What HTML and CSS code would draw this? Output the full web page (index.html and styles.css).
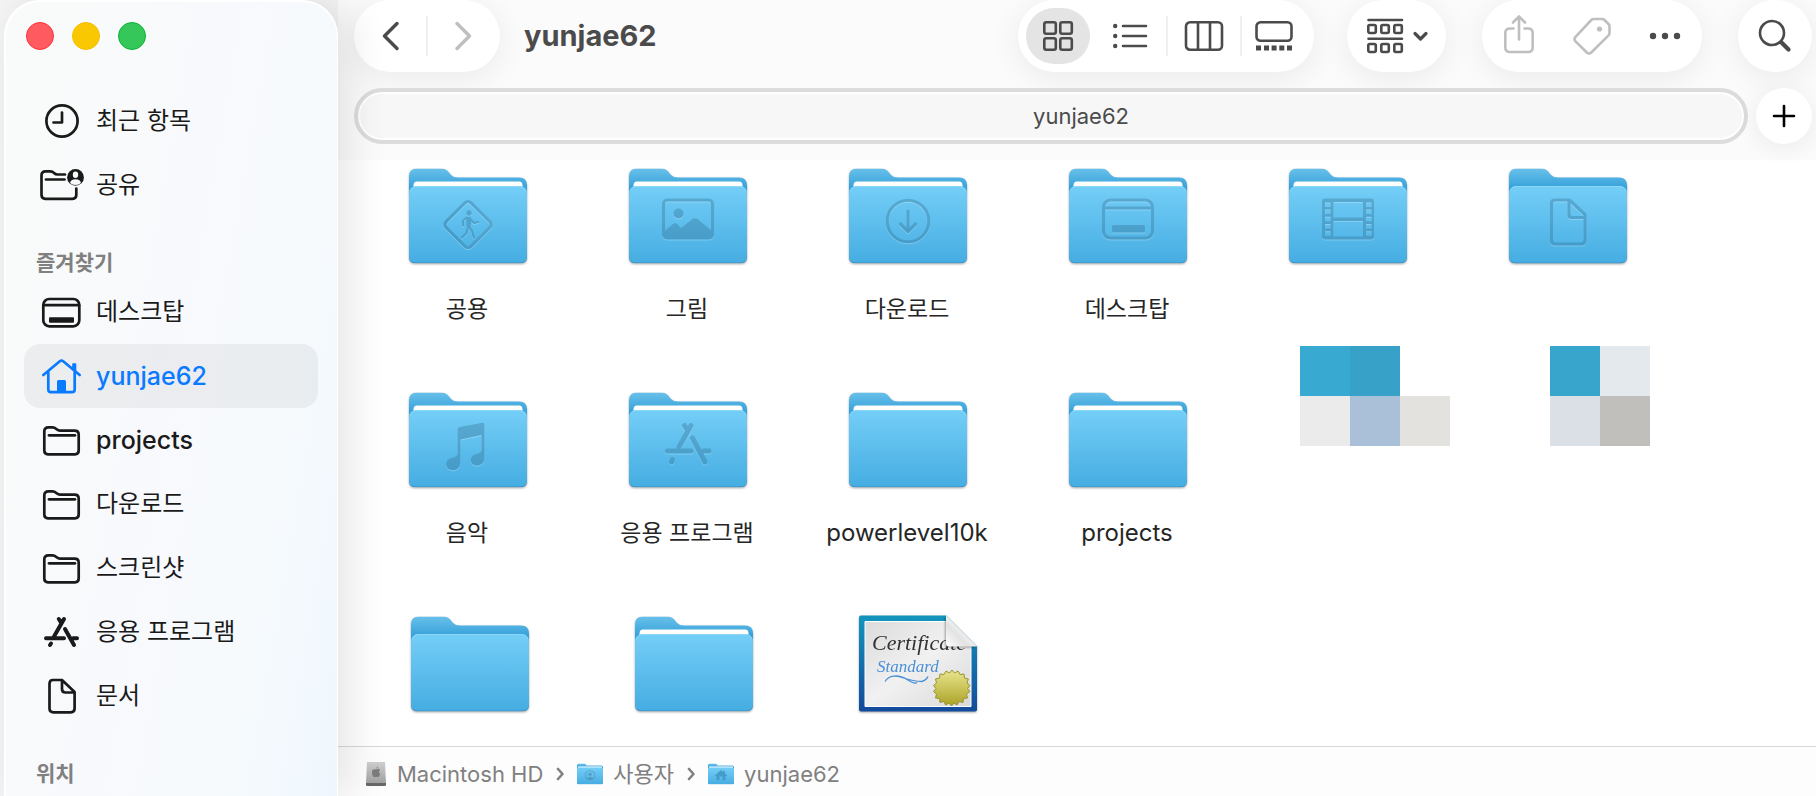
FILE: index.html
```html
<!DOCTYPE html>
<html lang="ko">
<head>
    <meta charset="UTF-8">
    <meta name="viewport" content="width=device-width, initial-scale=1.0">
    <title>yunjae62</title>
    <link rel="stylesheet" href="styles.css">
</head>
<body>
    <!-- Shared shapes -->
    <svg class="shapes" width="0" height="0" aria-hidden="true">
        <defs>
            <linearGradient id="backFill" x1="0" y1="0" x2="0" y2="1">
                <stop offset="0" stop-color="#68c0ea"/>
                <stop offset="0.5" stop-color="#36a1da"/>
                <stop offset="1" stop-color="#2f9bd5"/>
            </linearGradient>
            <linearGradient id="frontFill" x1="0" y1="0" x2="0" y2="1">
                <stop offset="0" stop-color="#74cef7"/>
                <stop offset="1" stop-color="#46ade2"/>
            </linearGradient>
            <linearGradient id="glyphFill" gradientUnits="userSpaceOnUse" x1="0" y1="30" x2="0" y2="76">
                <stop offset="0" stop-color="#58a9d1"/>
                <stop offset="1" stop-color="#459cc8"/>
            </linearGradient>
            <linearGradient id="certFrame" x1="0" y1="0" x2="0" y2="1">
                <stop offset="0" stop-color="#1395bd"/>
                <stop offset="1" stop-color="#134a9c"/>
            </linearGradient>
            <linearGradient id="certPaper" x1="0" y1="0" x2="1" y2="1">
                <stop offset="0" stop-color="#dcdcdc"/>
                <stop offset="0.5" stop-color="#f1f1f1"/>
                <stop offset="1" stop-color="#d9d9d9"/>
            </linearGradient>
            <linearGradient id="certFold" x1="0" y1="1" x2="0.6" y2="0.4">
                <stop offset="0" stop-color="#ffffff"/>
                <stop offset="0.6" stop-color="#e2e2e2"/>
                <stop offset="1" stop-color="#fafafa"/>
            </linearGradient>
            <linearGradient id="sealFill" x1="0" y1="0" x2="0" y2="1">
                <stop offset="0" stop-color="#e9e68f"/>
                <stop offset="1" stop-color="#aba226"/>
            </linearGradient>
            <linearGradient id="diskFill" x1="0" y1="0" x2="0" y2="1">
                <stop offset="0" stop-color="#cfcfcf"/>
                <stop offset="1" stop-color="#a2a2a2"/>
            </linearGradient>
        </defs>
        <symbol id="folder-back" viewBox="0 0 118 95">
            <path fill="url(#backFill)" d="M0 8Q0 0 8 0H32Q37 0 40 4L42 6.500Q44.500 9 49 9H110Q118 9 118 17V40H0Z"/>
        </symbol>
        <symbol id="folder-front" viewBox="0 0 118 95">
            <path fill="#3b94c9" d="M0 40H118V88Q118 95 111 95H7Q0 95 0 88Z"/>
            <path fill="url(#frontFill)" d="M0 26Q0 17.500 8 17.500H110Q118 17.500 118 26V87Q118 94 111 94H7Q0 94 0 87Z"/>
            <path fill="none" stroke="#8cd8fa" d="M1 23Q2 18 8 18H110Q116 18 117 23"/>
        </symbol>
        <symbol id="folder-full" viewBox="0 0 118 95">
            <use href="#folder-back"/>
            <path fill="#fff" d="M4.500 20V17Q4.500 13 8 13H110Q113.500 13 113.500 17V20Z"/>
            <use href="#folder-front"/>
        </symbol>
        <symbol id="folder-empty" viewBox="0 0 118 95">
            <use href="#folder-back"/>
            <use href="#folder-front"/>
        </symbol>
        <symbol id="nav-folder" viewBox="0 0 44 40">
            <path d="M8 34.300Q4.300 34.300 4.300 30.600V11.500Q4.300 7.300 8.500 7.300H12.500Q14.500 7.300 16 8.700L17 9.500Q18.200 10.600 20 10.600H34.500Q38.700 10.600 38.700 14.500V30.600Q38.700 34.300 35 34.300Z"/>
            <path d="M9 15.300H35"/>
        </symbol>
        <symbol id="nav-apps" viewBox="0 0 44 40">
            <path d="M24 7L14 24.500M18.800 7L21 10.500M25 17L34 33M6 26.300H24M33 26.300H37M11 31.500L10 33" stroke-width="4"/>
        </symbol>
    </svg>

    <div class="window">
        <aside class="sidebar">
            <div class="lights">
                <button class="light light-close" aria-label="닫기"></button>
                <button class="light light-minimize" aria-label="최소화"></button>
                <button class="light light-zoom" aria-label="확대"></button>
            </div>
            <nav>
                <ul class="nav-list">
                    <li><a class="nav-item" href="#">
                        <svg class="nav-icon" viewBox="0 0 44 40"><circle cx="22" cy="20" r="15.600"/><path d="M22 11.500V21.500H13.500"/></svg>
                        최근 항목</a></li>
                    <li><a class="nav-item" href="#">
                        <svg class="nav-icon" viewBox="0 0 44 40">
                            <path d="M25 9.500H17.500Q15.500 9.500 14 8L13 7.200Q11.800 6.300 10 6.300H5.500Q1.500 6.300 1.500 10.500V30Q1.500 33.800 5.300 33.800H32.500Q36.300 33.800 36.300 30V23.500"/>
                            <path d="M6 14.500H24.500"/>
                            <circle class="solid" cx="35.500" cy="12.400" r="8.400"/>
                            <ellipse class="hole" cx="35.500" cy="9.800" rx="2.700" ry="3.200"/>
                            <path class="hole" d="M30 18Q30.500 14.200 35.500 14.200T41 18Q39 20 35.500 20T30 18Z"/>
                        </svg>
                        공유</a></li>
                </ul>
                <h2 class="nav-title">즐겨찾기</h2>
                <ul class="nav-list">
                    <li><a class="nav-item" href="#">
                        <svg class="nav-icon" viewBox="0 0 44 40"><rect x="3.300" y="7" width="36" height="27.300" rx="6"/><path d="M4 13.200H39"/><rect class="solid" x="9" y="25.300" width="25" height="5.400" rx="1"/></svg>
                        데스크탑</a></li>
                    <li><a class="nav-item latin active" href="#" aria-current="page">
                        <svg class="nav-icon" viewBox="0 0 44 40">
                            <path d="M3.300 19L19.800 5.300Q21.500 4 23.200 5.300L39.700 19M8.300 16V33.500Q8.300 36.200 11 36.200H32Q34.700 36.200 34.700 33.500V16"/>
                            <path class="solid" d="M17 36V25.500Q17 24 18.500 24H24.500Q26 24 26 25.500V36ZM32.200 12V8Q32.200 7.300 33 7.300H35.500Q36.300 7.300 36.300 8V15.500Z"/>
                        </svg>
                        yunjae62</a></li>
                    <li><a class="nav-item latin" href="#"><svg class="nav-icon"><use href="#nav-folder"/></svg>projects</a></li>
                    <li><a class="nav-item" href="#"><svg class="nav-icon"><use href="#nav-folder"/></svg>다운로드</a></li>
                    <li><a class="nav-item" href="#"><svg class="nav-icon"><use href="#nav-folder"/></svg>스크린샷</a></li>
                    <li><a class="nav-item" href="#"><svg class="nav-icon"><use href="#nav-apps"/></svg>응용 프로그램</a></li>
                    <li><a class="nav-item" href="#">
                        <svg class="nav-icon" viewBox="0 0 44 40"><path d="M13 4H22L34.600 16V32.500Q34.600 36.300 30.800 36.300H13.500Q9.500 36.300 9.500 32.500V7.800Q9.500 4 13 4ZM22 4V13Q22 16.500 25.500 16.500H34.500"/></svg>
                        문서</a></li>
                </ul>
                <h2 class="nav-title">위치</h2>
            </nav>
        </aside>

        <main class="main">
            <header class="header">
                <div class="toolbar">
                    <div class="pill nav-pill">
                        <button class="tool" aria-label="뒤로"><svg width="20" height="32" viewBox="0 0 20 32" stroke-width="3.500"><path d="M17 3.500L4.500 16L17 28.500"/></svg></button>
                        <span class="divider"></span>
                        <button class="tool" aria-label="앞으로" disabled><svg width="20" height="32" viewBox="0 0 20 32" stroke-width="3.500"><path d="M3 3.500L15.500 16L3 28.500"/></svg></button>
                    </div>
                    <h1 class="title">yunjae62</h1>

                    <div class="pill view-pill">
                        <button class="tool selected" aria-label="아이콘 보기"><svg width="32" height="32" viewBox="0 0 32 32"><rect x="2.300" y="2.300" width="11.500" height="11.500" rx="2"/><rect x="18.300" y="2.300" width="11.500" height="11.500" rx="2"/><rect x="2.300" y="18.300" width="11.500" height="11.500" rx="2"/><rect x="18.300" y="18.300" width="11.500" height="11.500" rx="2"/></svg></button>
                        <button class="tool tool-list" aria-label="목록 보기"><svg width="36" height="32" viewBox="0 0 36 32"><path d="M11 6H34M11 16H34M11 26H34"/><path class="solid" d="M1 6a2.200 2.200 0 1 0 4.400 0a2.200 2.200 0 1 0-4.400 0M1 16a2.200 2.200 0 1 0 4.400 0a2.200 2.200 0 1 0-4.400 0M1 26a2.200 2.200 0 1 0 4.400 0a2.200 2.200 0 1 0-4.400 0"/></svg></button>
                        <span class="divider"></span>
                        <button class="tool tool-columns" aria-label="계층 보기"><svg width="40" height="32" viewBox="0 0 40 32"><rect x="2" y="2.300" width="36" height="27.400" rx="4"/><path d="M14 3V29M26 3V29"/></svg></button>
                        <span class="divider"></span>
                        <button class="tool" aria-label="갤러리 보기"><svg width="40" height="32" viewBox="0 0 40 32"><rect x="2.500" y="2.300" width="35" height="18.500" rx="4"/><path class="solid" d="M2 25.500H7V30.500H2ZM10 25.500H15V30.500H10ZM17.600 25.500H22.600V30.500H17.600ZM25.300 25.500H30.300V30.500H25.300ZM33 25.500H38V30.500H33Z"/></svg></button>
                    </div>

                    <div class="pill group-pill">
                        <button class="tool" aria-label="그룹화"><svg width="64" height="38" viewBox="0 0 64 38"><path d="M3.500 3H37M3.500 21.800H37"/><rect x="3.300" y="8" width="7.500" height="8" rx="1.500"/><rect x="16.300" y="8" width="7.500" height="8" rx="1.500"/><rect x="29.300" y="8" width="7.500" height="8" rx="1.500"/><rect x="3.300" y="27" width="7.500" height="8" rx="1.500"/><rect x="16.300" y="27" width="7.500" height="8" rx="1.500"/><rect x="29.300" y="27" width="7.500" height="8" rx="1.500"/><path stroke-width="3.200" d="M50 16.500L55.500 22L61 16.500"/></svg></button>
                    </div>

                    <div class="pill action-pill">
                        <button class="tool" aria-label="공유하기" disabled><svg width="36" height="42" viewBox="0 0 36 42"><path d="M12.500 13.500H9Q4.300 13.500 4.300 18V32.500Q4.300 37 9 37H27Q31.700 37 31.700 32.500V18Q31.700 13.500 27 13.500H23.500M18 24.500V2.500M12 7.500L18 1.500L24 7.500"/></svg></button>
                        <button class="tool" aria-label="태그" disabled><svg width="42" height="42" viewBox="0 0 42 42"><path d="M22.500 4H31Q32.500 4 33.500 5L37.500 9Q38.500 10 38.500 11.500V18Q38.500 19.500 37.300 20.700L20.300 37.500Q18 39.500 15.800 37.500L4.500 26.300Q2.500 24 4.500 21.800L20.300 5Q21.300 4 22.500 4Z"/><circle class="solid" cx="28.500" cy="14" r="2.600"/></svg></button>
                        <button class="tool" aria-label="더 보기"><svg width="32" height="8" viewBox="0 0 32 8"><circle class="solid" cx="4" cy="4" r="3.200"/><circle class="solid" cx="16" cy="4" r="3.200"/><circle class="solid" cx="28" cy="4" r="3.200"/></svg></button>
                    </div>

                    <div class="pill search-pill">
                        <button class="tool" aria-label="검색"><svg width="36" height="36" viewBox="0 0 36 36"><circle cx="15" cy="15" r="12"/><path stroke-width="4.200" d="M24.500 24.500L31.500 31.500"/></svg></button>
                    </div>
                </div>

                <div class="tabs">
                    <button class="tab">yunjae62</button>
                    <button class="add-tab" aria-label="새로운 탭"><svg width="24" height="24" viewBox="0 0 24 24"><path d="M12 2V22M2 12H22"/></svg></button>
                </div>
            </header>

            <section class="files">
                <div class="grid">
                    <a class="file" href="#">
                        <svg class="file-icon" viewBox="0 0 118 95"><use href="#folder-full"/>
                            <g class="glyph"><rect x="41.500" y="38.500" width="35" height="35" rx="4" transform="rotate(45 59 56)" stroke-width="3"/>
                            <circle class="ink" cx="60" cy="44.500" r="2.700"/>
                            <path class="ink" d="M57 48.500L61.500 48L62.500 53L61 60L57.500 59Z"/>
                            <path stroke-width="2.200" d="M57 49.500L54 52V57M62 51L65 54.500L69 53.500M60.500 59L63 62.500L65 69M58.500 60L57.500 64.500L53 69"/></g></svg>
                        <span class="file-name">공용</span>
                    </a>
                    <a class="file" href="#">
                        <svg class="file-icon" viewBox="0 0 118 95"><use href="#folder-full"/>
                            <g class="glyph"><rect x="34.500" y="31.500" width="49" height="38" rx="4" stroke-width="3.200"/><circle class="ink" cx="49.500" cy="45" r="5"/>
                            <path class="ink" d="M35 63L44 55.500Q46 54 48 55.500L52 59.500L63.500 50.500Q66 49 68.500 50.500L83.500 63V67Q83.500 70 80 70H38Q35 70 35 67Z"/></g></svg>
                        <span class="file-name">그림</span>
                    </a>
                    <a class="file" href="#">
                        <svg class="file-icon" viewBox="0 0 118 95"><use href="#folder-full"/>
                            <g class="glyph"><circle cx="59" cy="52.500" r="20.800" stroke-width="3"/><path stroke-width="3.200" d="M59 42.500V62M51.500 55.500L59 63L66.500 55.500"/></g></svg>
                        <span class="file-name">다운로드</span>
                    </a>
                    <a class="file" href="#">
                        <svg class="file-icon" viewBox="0 0 118 95"><use href="#folder-full"/>
                            <g class="glyph"><rect x="34.500" y="31.500" width="49" height="38" rx="7" stroke-width="3.200"/><path stroke-width="3" d="M36 39.500H82"/><rect class="ink" x="43" y="56.500" width="33" height="7.500" rx="1.500"/></g></svg>
                        <span class="file-name">데스크탑</span>
                    </a>
                    <a class="file" href="#" aria-label="동영상">
                        <svg class="file-icon" viewBox="0 0 118 95"><use href="#folder-full"/>
                            <g class="glyph"><path class="ink" fill-rule="evenodd" d="M36 30H82Q85 30 85 33V68Q85 71 82 71H36Q33 71 33 68V33Q33 30 36 30ZM44.500 33.500V49H74V33.500ZM44.500 52.500V68H74V52.500ZM36 34V38.500H41.500V34ZM36 41V45.500H41.500V41ZM36 48.300V52.800H41.500V48.300ZM36 55.500V60H41.500V55.500ZM36 62.800V67.300H41.500V62.800ZM77 34V38.500H82.500V34ZM77 41V45.500H82.500V41ZM77 48.300V52.800H82.500V48.300ZM77 55.500V60H82.500V55.500ZM77 62.800V67.300H82.500V62.800Z"/></g></svg>
                    </a>
                    <a class="file" href="#" aria-label="문서">
                        <svg class="file-icon" viewBox="0 0 118 95"><use href="#folder-empty"/>
                            <g class="glyph"><path stroke-width="3.200" d="M46 31.500H60.500L76 46V71.500Q76 75.500 72 75.500H46.500Q42.500 75.500 42.500 71.500V35Q42.500 31.500 46 31.500ZM60 32V46Q60 49 63 49H75.500"/></g></svg>
                    </a>
                    <a class="file" href="#">
                        <svg class="file-icon" viewBox="0 0 118 95"><use href="#folder-full"/>
                            <g class="glyph"><path class="ink" d="M48.500 37Q48.500 35 50.500 34.500L73.500 30.200Q75.500 30 75.500 32V65.500C75.500 71 71 73.500 67 73C61.500 72.500 60 66 64 63C67.500 60.500 72.500 61.500 72.500 57V42.500L51.500 47V69.500C51.500 76.500 45.500 78.500 42 77.500C36.500 76.500 35.500 69.500 40 66.500C43.500 64.300 48.500 65.500 48.500 60.500Z"/></g></svg>
                        <span class="file-name">음악</span>
                    </a>
                    <a class="file" href="#">
                        <svg class="file-icon" viewBox="0 0 118 95"><use href="#folder-full"/>
                            <g class="glyph"><path stroke-width="5" d="M62 33L50 54.500M55.500 33L58 37M63.500 45.500L76 69.500M38.500 58.500H62M75 58.500H80M43.500 67L42.500 69.500"/></g></svg>
                        <span class="file-name">응용 프로그램</span>
                    </a>
                    <a class="file" href="#">
                        <svg class="file-icon" viewBox="0 0 118 95"><use href="#folder-full"/></svg>
                        <span class="file-name latin">powerlevel10k</span>
                    </a>
                    <a class="file" href="#">
                        <svg class="file-icon" viewBox="0 0 118 95"><use href="#folder-full"/></svg>
                        <span class="file-name latin">projects</span>
                    </a>
                    <div class="mosaics">
                        <div class="mosaic mosaic-wide">
                            <i class="c1"></i><i class="c2"></i><i></i>
                            <i class="c3"></i><i class="c4"></i><i class="c5"></i>
                        </div>
                        <div class="mosaic">
                            <i class="c6"></i><i class="c7"></i>
                            <i class="c8"></i><i class="c9"></i>
                        </div>
                    </div>
                </div>
                <div class="grid grid-loose">
                    <a class="file" href="#" aria-label="폴더">
                        <svg class="file-icon" viewBox="0 0 118 95"><use href="#folder-empty"/></svg>
                    </a>
                    <a class="file" href="#" aria-label="폴더">
                        <svg class="file-icon" viewBox="0 0 118 95"><use href="#folder-full"/></svg>
                    </a>
                    <a class="file" href="#" aria-label="인증서">
                        <svg class="file-icon" viewBox="0 0 118 95">
                            <path fill="url(#certFrame)" d="M2 -1H87L118 30V93Q118 95 116 95H2Q0 95 0 93V1Q0 -1 2 -1Z"/>
                            <path fill="url(#certPaper)" stroke="#fff" d="M6 5H88L112 29V90H6Z"/>
                            <text class="cert-name" x="13" y="33">Certificate</text>
                            <text class="cert-kind" x="18" y="55">Standard</text>
                            <path fill="none" stroke="#4a8fd6" stroke-width="1.300" d="M26 65Q31 57 43 61T63 65Q67 64 69 60M33 60Q40 58 48 63T58 66"/>
                            <path fill="url(#sealFill)" stroke="#9a9430" d="M93 53.500L95.500 56.500L99 54.500L101 58L105 57.500L105.500 61.500L109.300 62.500L108 66.500L111 69L108.500 72L111 75L107.500 77.500L108.500 81.500L104.500 82L104 86L100 85L98 88.500L95 86.500L92.500 89.500L90 86.500L86.500 88.500L85 85L81 86L80.500 82L76.500 81.500L77.500 77.500L74.500 75L77 72L74.500 69L77.500 66.500L76.500 62.500L80.500 61.500L81 57.500L85 58L87 54.500L90.500 56.500Z"/>
                            <path class="cert-fold" fill="url(#certFold)" d="M87 -1V27Q87 30 90 30H118Z"/>
                        </svg>
                    </a>
                </div>
            </section>

            <footer class="path-bar">
                <a class="path-item" href="#">
                    <svg width="22" height="26" viewBox="0 0 22 26">
                        <path fill="#686868" d="M1 20H21V24Q21 25 20 25H2Q1 25 1 24Z"/>
                        <path fill="url(#diskFill)" d="M2 1H20L21 22H1Z"/>
                        <path fill="#7c7c7c" d="M11.500 7.500Q11.500 6 13 5.500Q13 7.500 11.500 7.500M11 8.500Q14 7 15 9Q13 11 15.200 13Q14 17 12.500 16Q11 15.500 10 16Q8 17 7 12.500Q6.500 8 10 8.200Z"/>
                    </svg>
                    Macintosh HD
                </a>
                <svg class="path-arrow" width="8" height="14" viewBox="0 0 8 14"><path d="M2 2L6.500 7L2 12"/></svg>
                <a class="path-item" href="#">
                    <svg width="26" height="22" viewBox="0 0 118 95">
                        <use href="#folder-full"/>
                        <g class="glyph" stroke-width="5"><circle cx="59" cy="54" r="22"/><circle class="ink" cx="59" cy="49" r="9"/><path class="ink" d="M44 68Q48 60 59 60T74 68Q68 75 59 75T44 68Z"/></g>
                    </svg>
                    사용자
                </a>
                <svg class="path-arrow" width="8" height="14" viewBox="0 0 8 14"><path d="M2 2L6.500 7L2 12"/></svg>
                <a class="path-item" href="#">
                    <svg width="26" height="22" viewBox="0 0 118 95">
                        <use href="#folder-full"/>
                        <path fill="#459cc8" fill-rule="evenodd" d="M31 54L59 29L70 39V33H77V45L87 54L83 58L79 55V76H39V55L35 58ZM52 76H66V59H52Z"/>
                    </svg>
                    yunjae62
                </a>
            </footer>
        </main>
    </div>
</body>
</html>
```
FILE: styles.css
```css
* {
    box-sizing: border-box;
}
body {
    margin: 0;
    font-family: Inter, "Noto Sans CJK KR", sans-serif;
    background-color: #f4f4f4;
    color: #1a1a1a;
}
a {
    color: inherit;
    text-decoration: none;
}
button {
    border: none;
    padding: 0;
    background: none;
    font: inherit;
    color: inherit;
    cursor: pointer;
}
.shapes {
    position: absolute;
}
.window {
    display: flex;
    height: 100vh;
    overflow: hidden;
    padding-left: 4px;
}

/* Sidebar */
.sidebar {
    flex: 0 0 334px;
    z-index: 1;
    padding: 20px 19px 0 18px;
    border: 2px solid #fff;
    border-right-width: 1px;
    border-bottom: none;
    border-radius: 36px 36px 0 0;
    background: linear-gradient(100deg, #f9fbfa 0%, #f8f9fc 45%, #f6fafd 75%, #eff7fe 100%);
    box-shadow: 12px 0 40px rgba(0, 0, 0, 0.1);
    overflow: hidden;
}
.lights {
    display: flex;
    gap: 18px;
    margin: 0 2px 39px;
}
.light {
    width: 28px;
    height: 28px;
    border-radius: 50%;
}
.light-close {
    background-color: #ff5a5f;
    border: 1px solid #f5333f;
}
.light-minimize {
    background-color: #fac800;
    border: 1px solid #f4bd00;
}
.light-zoom {
    background-color: #35c759;
    border: 1px solid #08b634;
}
.nav-list {
    list-style: none;
    margin: 0;
    padding: 0;
}
.nav-item {
    display: flex;
    align-items: center;
    gap: 12px;
    height: 64px;
    padding-left: 16px;
    border-radius: 16px;
    font-size: 24px;
    line-height: 32px;
    white-space: nowrap;
}
.nav-item.latin {
    font-size: 25px;
    font-weight: 500;
}
.nav-item.active {
    background-color: rgba(0, 0, 0, 0.05);
    color: #0a7aff;
}
.nav-icon {
    width: 44px;
    height: 40px;
    fill: none;
    stroke: currentColor;
    stroke-width: 2.7;
    stroke-linecap: round;
    stroke-linejoin: round;
}
.solid {
    fill: currentColor;
    stroke: none;
}
.hole {
    fill: #f9fafb;
    stroke: none;
}
.nav-title {
    margin: 29px 0 0 12px;
    font-size: 21px;
    line-height: 34px;
    font-weight: 600;
    color: #808080;
}

/* Toolbar */
.main {
    flex: 1;
    display: flex;
    flex-direction: column;
    min-width: 0;
    background-color: #fff;
}
.header {
    height: 160px;
    padding: 0 4px 0 16px;
    background-color: #fbfbfb;
}
.toolbar {
    display: flex;
    gap: 36px;
    margin-bottom: 16px;
    color: #4b4b4b;
}
.pill {
    display: flex;
    align-items: center;
    height: 72px;
    border-radius: 36px;
    background-color: #fff;
    box-shadow: 0 6px 32px rgba(0, 0, 0, 0.07);
}
.tool {
    display: flex;
    align-items: center;
    justify-content: center;
    flex: 1;
    height: 56px;
    border-radius: 28px;
}
.tool:disabled {
    color: #bfbfbf;
}
.tool svg,
.add-tab svg,
.path-arrow {
    fill: none;
    stroke: currentColor;
    stroke-linecap: round;
    stroke-linejoin: round;
}
.tool svg:not([stroke-width]),
.add-tab svg {
    stroke-width: 2.6;
}
.tool .solid {
    fill: currentColor;
    stroke: none;
}
.tool.selected {
    background-color: #e4e4e4;
}
.divider {
    width: 2px;
    height: 40px;
    background-color: #f0f0f0;
}
.nav-pill {
    width: 146px;
}
.title {
    flex: 1;
    margin: 0 0 0 -12px;
    font-size: 29px;
    line-height: 72px;
    font-weight: 700;
}
.view-pill {
    width: 296px;
    padding: 0 8px;
}
.view-pill .tool {
    flex: 0 0 64px;
}
.view-pill .tool-list {
    flex: 1;
    padding-left: 4px;
}
.view-pill .tool-columns {
    flex-basis: 72px;
}
.group-pill {
    width: 99px;
    margin-left: -3px;
}
.action-pill {
    width: 220px;
}
.search-pill {
    width: 74px;
}
.tabs {
    display: flex;
    gap: 8px;
}
.tab {
    flex: 1;
    height: 56px;
    padding-left: 60px;
    border: 4px solid #dcdcdc;
    border-radius: 28px;
    background-color: #f7f7f7;
    box-shadow: inset 0 0 0 2px #fff;
    font-size: 22px;
    color: #4b4b4b;
}
.add-tab {
    display: flex;
    align-items: center;
    justify-content: center;
    width: 56px;
    height: 56px;
    border-radius: 50%;
    background-color: #fff;
    box-shadow: 0 4px 24px rgba(0, 0, 0, 0.07);
    color: #000;
}

/* Files */
.files {
    flex: 1;
    min-height: 0;
    padding-left: 20px;
    overflow: hidden;
}
.grid {
    display: grid;
    grid-template-columns: repeat(auto-fill, 220px);
    grid-auto-rows: 224px;
}
.grid-loose {
    grid-template-columns: repeat(auto-fill, 224px);
}
.file {
    display: flex;
    flex-direction: column;
    align-items: center;
    padding-top: 8px;
}
.file-icon {
    width: 118px;
    height: 96px;
    overflow: visible;
    filter: drop-shadow(0 1px 1px rgba(0, 0, 0, 0.35));
}
.glyph {
    fill: none;
    stroke: url(#glyphFill);
    stroke-linecap: round;
    stroke-linejoin: round;
    filter: drop-shadow(0 1px 0 rgba(255, 255, 255, 0.25));
}
.ink {
    fill: url(#glyphFill);
    stroke: none;
}
.file-name {
    margin-top: 29px;
    padding-right: 2px;
    font-size: 23px;
    line-height: 32px;
    color: #262626;
}
.file-name.latin {
    font-size: 24px;
}
.cert-name {
    font-family: "Liberation Serif", serif;
    font-style: italic;
    font-size: 22px;
    fill: #333;
}
.cert-kind {
    font-family: "Liberation Serif", serif;
    font-style: italic;
    font-size: 17px;
    fill: #4a8fd6;
}
.cert-fold {
    filter: drop-shadow(-1px 1px 1px rgba(0, 0, 0, 0.35));
}
.mosaics {
    grid-column: span 2;
    display: flex;
    gap: 100px;
    align-self: start;
    margin-top: -38px;
    padding-left: 62px;
}
.mosaic {
    display: grid;
    grid-template-columns: repeat(2, 50px);
    grid-auto-rows: 50px;
}
.mosaic-wide {
    grid-template-columns: repeat(3, 50px);
}
.c1 { background-color: #38aad1; }
.c2 { background-color: #38a1c8; }
.c3 { background-color: #ebebeb; }
.c4 { background-color: #aabfd8; }
.c5 { background-color: #e3e2df; }
.c6 { background-color: #38a5cc; }
.c7 { background-color: #e3e9ec; }
.c8 { background-color: #dae0e5; }
.c9 { background-color: #c1bfbb; }

/* Path bar */
.path-bar {
    display: flex;
    align-items: center;
    gap: 13px;
    height: 50px;
    padding: 5px 0 0 27px;
    border-top: 1px solid #d8d8d8;
    background-color: #fdfdfd;
    font-size: 22px;
    line-height: 32px;
    color: #808080;
}
.path-item {
    display: flex;
    align-items: center;
    gap: 10px;
}
.path-arrow {
    stroke-width: 2.6;
}
```
